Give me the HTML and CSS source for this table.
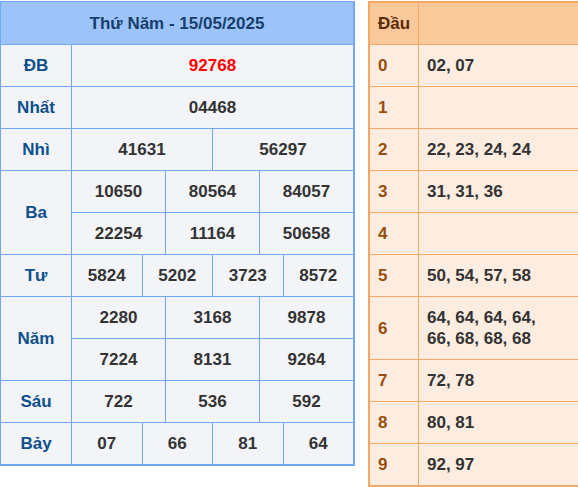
FILE: index.html
```html
<!DOCTYPE html>
<html lang="vi">
<head>
<meta charset="utf-8">
<title>Kết quả xổ số - Thứ Năm 15/05/2025</title>
<link rel="stylesheet" href="styles.css">
</head>
<body>
<div class="page">
  <div class="kq">
    <div class="kq-head">Thứ Năm - 15/05/2025</div>

    <div class="lbl">ĐB</div>
    <div class="num s12 red">92768</div>

    <div class="lbl">Nhất</div>
    <div class="num s12">04468</div>

    <div class="lbl">Nhì</div>
    <div class="num s6">41631</div>
    <div class="num s6">56297</div>

    <div class="lbl r2">Ba</div>
    <div class="num s4">10650</div>
    <div class="num s4">80564</div>
    <div class="num s4">84057</div>
    <div class="num s4">22254</div>
    <div class="num s4">11164</div>
    <div class="num s4">50658</div>

    <div class="lbl">Tư</div>
    <div class="num s3">5824</div>
    <div class="num s3">5202</div>
    <div class="num s3">3723</div>
    <div class="num s3">8572</div>

    <div class="lbl r2">Năm</div>
    <div class="num s4">2280</div>
    <div class="num s4">3168</div>
    <div class="num s4">9878</div>
    <div class="num s4">7224</div>
    <div class="num s4">8131</div>
    <div class="num s4">9264</div>

    <div class="lbl">Sáu</div>
    <div class="num s4">722</div>
    <div class="num s4">536</div>
    <div class="num s4">592</div>

    <div class="lbl">Bảy</div>
    <div class="num s3">07</div>
    <div class="num s3">66</div>
    <div class="num s3">81</div>
    <div class="num s3">64</div>
  </div>

  <div class="dau">
    <div class="dau-head">Đầu</div>
    <div class="dau-head"></div>

    <div class="d">0</div><div class="v">02, 07</div>
    <div class="d">1</div><div class="v"></div>
    <div class="d">2</div><div class="v">22, 23, 24, 24</div>
    <div class="d">3</div><div class="v">31, 31, 36</div>
    <div class="d">4</div><div class="v"></div>
    <div class="d">5</div><div class="v">50, 54, 57, 58</div>
    <div class="d">6</div><div class="v">64, 64, 64, 64, 66, 68, 68, 68</div>
    <div class="d">7</div><div class="v">72, 78</div>
    <div class="d">8</div><div class="v">80, 81</div>
    <div class="d">9</div><div class="v">92, 97</div>
  </div>
</div>
</body>
</html>
```

FILE: styles.css
```css
html, body {
  margin: 0;
  padding: 0;
  background: #ffffff;
  overflow: hidden;
}

body {
  font-family: "Liberation Sans", Arial, sans-serif;
  font-weight: bold;
  font-size: 17px;
  color: #333333;
}

.page {
  display: flex;
  align-items: flex-start;
  gap: 13px;
  padding-top: 1px;
  width: 600px;
}

/* Left: results table */
.kq {
  flex: 0 0 auto;
  width: 352px;
  display: grid;
  grid-template-columns: 70px repeat(12, 1fr);
  grid-template-rows: 42px;
  grid-auto-rows: 41px;
  gap: 1px;
  background: #70a7f6;
  border: 1px solid #70a7f6;
  border-right-width: 2px;
  border-bottom-width: 2px;
}

.kq-head {
  grid-column: 1 / -1;
  background: #9dc3fb;
  color: #173f6c;
  display: flex;
  align-items: center;
  justify-content: center;
  padding-top: 1px;
}

.lbl,
.num {
  background: #f3f4f8;
  display: flex;
  align-items: center;
  justify-content: center;
  line-height: 20px;
}

.lbl {
  grid-column: 1;
  color: #0e4f8c;
}

.r2 { grid-row: span 2; }
.s12 { grid-column: span 12; }
.s6 { grid-column: span 6; }
.s4 { grid-column: span 4; }
.s3 { grid-column: span 3; }

.red { color: #ff0000; }

/* Right: đầu table */
.dau {
  flex: 0 0 auto;
  width: 220px;
  display: grid;
  grid-template-columns: 48px 1fr;
  gap: 1px;
  background: #f6a962;
  border: 2px solid #f6a962;
  border-right: none;
}

.dau-head {
  background: #f9c89b;
  color: #5a2c07;
  height: 41px;
  display: flex;
  align-items: center;
  padding-left: 8px;
}

.d,
.v {
  background: #fdece0;
  padding: 10px 8px;
  line-height: 21px;
  min-height: 21px;
}

.d {
  color: #984f0c;
  display: flex;
  align-items: center;
}

.v {
  padding-right: 34px;
  display: flex;
  align-items: center;
}
```
